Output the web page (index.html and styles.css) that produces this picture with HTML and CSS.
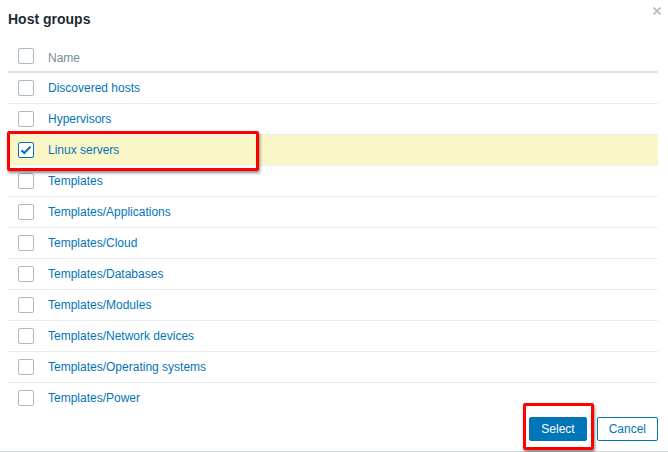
FILE: index.html
```html
<!DOCTYPE html>
<html>
<head>
<meta charset="utf-8">
<link rel="stylesheet" href="styles.css">
</head>
<body>
<div class="dialog">
  <div class="dialog-head">
    <h1 class="title">Host groups</h1>
    <button class="close" aria-label="Close">
      <svg width="8" height="8" viewBox="0 0 8 8"><path d="M0.5 0.5L7.5 7.5M7.5 0.5L0.5 7.5" stroke="#acbbc2" stroke-width="1.6" fill="none"/></svg>
    </button>
  </div>
  <div class="list">
    <div class="row head"><span class="cb"></span><span class="name">Name</span></div>
    <div class="row"><span class="cb"></span><a class="link">Discovered hosts</a></div>
    <div class="row"><span class="cb"></span><a class="link">Hypervisors</a></div>
    <div class="row selected"><span class="cb checked"><svg width="14" height="14" viewBox="0 0 14 14"><path d="M2.5 7.2L5.3 10L11.5 3.8" stroke="#0275b8" stroke-width="2" fill="none"/></svg></span><a class="link">Linux servers</a></div>
    <div class="row"><span class="cb"></span><a class="link">Templates</a></div>
    <div class="row"><span class="cb"></span><a class="link">Templates/Applications</a></div>
    <div class="row"><span class="cb"></span><a class="link">Templates/Cloud</a></div>
    <div class="row"><span class="cb"></span><a class="link">Templates/Databases</a></div>
    <div class="row"><span class="cb"></span><a class="link">Templates/Modules</a></div>
    <div class="row"><span class="cb"></span><a class="link">Templates/Network devices</a></div>
    <div class="row"><span class="cb"></span><a class="link">Templates/Operating systems</a></div>
    <div class="row last"><span class="cb"></span><a class="link">Templates/Power</a></div>
  </div>
  <div class="footer">
    <button class="btn primary">Select</button>
    <button class="btn secondary">Cancel</button>
  </div>
  <div class="mark mark-row"></div>
  <div class="mark mark-btn"></div>
</div>
</body>
</html>
```
FILE: styles.css
```css
html, body {
  margin: 0;
  padding: 0;
  background: #fff;
}
body {
  font-family: "Liberation Sans", Arial, sans-serif;
  font-size: 12px;
  color: #1f2c33;
}
.dialog {
  position: relative;
  width: 668px;
  height: 451px;
  border-bottom: 1px solid #ccd5d9;
  box-sizing: content-box;
}
.dialog-head {
  display: flex;
  justify-content: space-between;
  align-items: flex-start;
  padding: 0 7px 0 8px;
  height: 41px;
}
.title {
  margin: 0;
  padding-top: 11px;
  font-size: 14px;
  line-height: 16px;
  font-weight: bold;
  color: #1f2c33;
}
.close {
  margin-top: 7px;
  padding: 0;
  border: 0;
  background: none;
  width: 8px;
  height: 8px;
  display: block;
}
.close svg { display: block; }
.list {
  margin: 0 10px 0 8px;
}
.row {
  display: flex;
  align-items: center;
  height: 30px;
  padding-left: 10px;
  border-bottom: 1px solid #ebeef0;
  line-height: 14px;
}
.row.head {
  height: 30px;
  border-bottom: 2px solid #dfe4e7;
}
.row.last { border-bottom: 0; }
.row.selected { background: #fbf6c7; }
.cb {
  width: 16px;
  height: 16px;
  box-sizing: border-box;
  border: 1px solid #acbbc2;
  border-radius: 2px;
  background: #fff;
  margin-right: 14px;
  flex: none;
  display: flex;
  align-items: center;
  justify-content: center;
}
.cb.checked { border-color: #0275b8; }
.cb svg { display: block; }
.name { color: #768d99; margin-top: 3px; }
.link { color: #0275b8; }
.footer {
  display: flex;
  justify-content: flex-end;
  gap: 10px;
  padding: 4px 10px 0 0;
}
.btn {
  height: 24px;
  box-sizing: border-box;
  padding: 0 11px;
  font-family: "Liberation Sans", Arial, sans-serif;
  font-size: 12px;
  border-radius: 2px;
  border: 1px solid #0275b8;
}
.btn.primary { background: #0275b8; color: #fff; }
.btn.secondary { background: #fff; color: #0275b8; }
.mark {
  position: absolute;
  border: 3px solid #f00;
  border-radius: 2px;
  box-shadow: 1px 2px 3px rgba(0,0,0,0.45);
  box-sizing: border-box;
}
.mark-row { left: 7px; top: 131px; width: 252px; height: 40px; }
.mark-btn { left: 523px; top: 403px; width: 71px; height: 47px; }
```
